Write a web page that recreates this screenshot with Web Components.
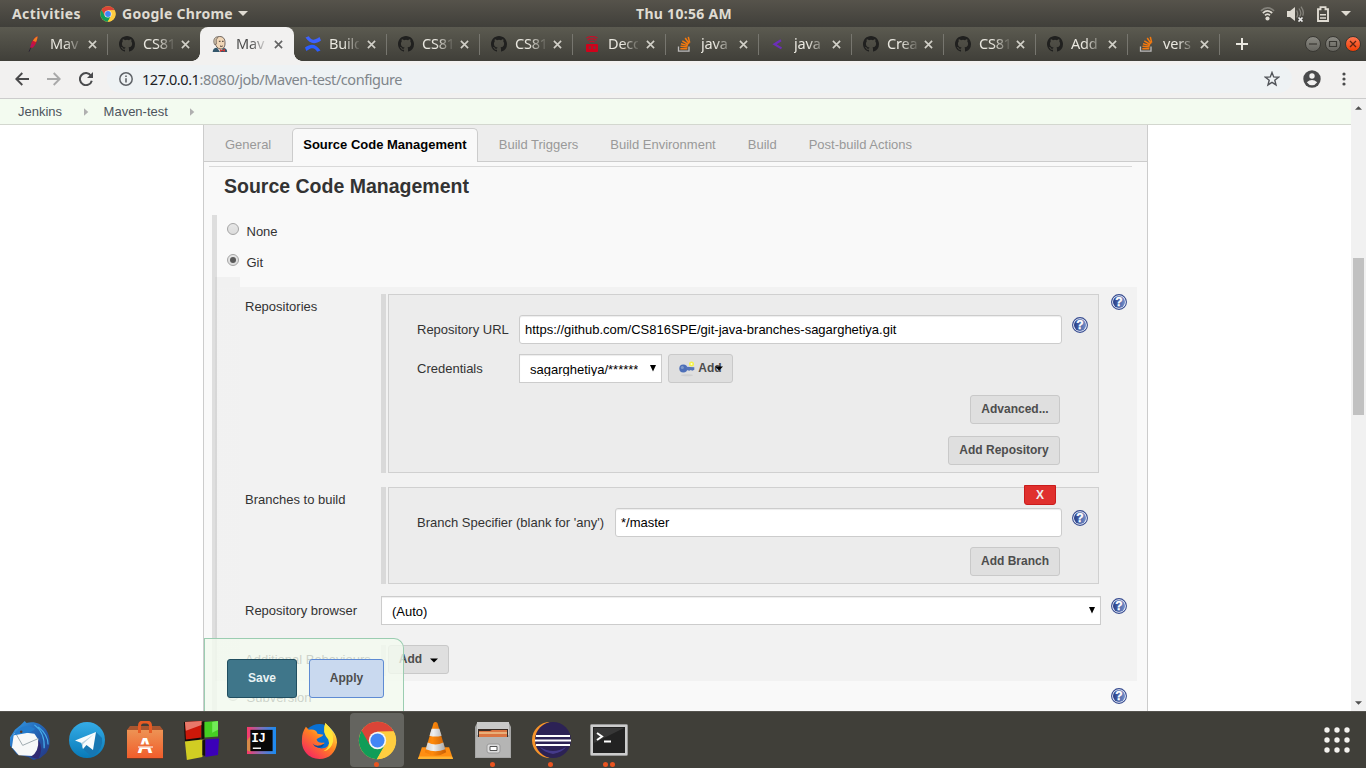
<!DOCTYPE html>
<html lang="en">
<head>
<meta charset="utf-8">
<title>Maven-test Config [Jenkins]</title>
<style>
html,body{margin:0;padding:0;height:768px;overflow:hidden;background:#fff}
</style>
</head>
<body>
<desktop-screen></desktop-screen>
<script>
const UI = '"Noto Sans","Open Sans",sans-serif';
const WEB = '"Liberation Sans",Arial,sans-serif';

function define(name, html, setup) {
  const tpl = document.createElement('template');
  customElements.define(name, class extends HTMLElement {
    connectedCallback() {
      if (this.shadowRoot) return;
      const root = this.attachShadow({mode: 'open'});
      tpl.innerHTML = typeof html === 'function' ? html(this) : html;
      root.append(tpl.content.cloneNode(true));
      if (setup) setup(this, root);
    }
  });
}

/* Text whose letter spacing is adjusted to fill a given width */
define('fit-text', '<style>:host{display:inline-block;white-space:nowrap}</style><span><slot></slot></span>', (el, root) => {
  const w = +el.getAttribute('w'), s = root.querySelector('span');
  const n = el.textContent.length;
  s.style.letterSpacing = ((w - s.getBoundingClientRect().width) / n) + 'px';
  el.style.width = w + 'px';
});

const github = '<path fill="#20201f" fill-rule="evenodd" d="M8 0C3.58 0 0 3.58 0 8c0 3.54 2.29 6.53 5.47 7.59.4.07.55-.17.55-.38 0-.19-.01-.82-.01-1.49-2.01.37-2.53-.49-2.69-.94-.09-.23-.48-.94-.82-1.13-.28-.15-.68-.52-.01-.53.63-.01 1.08.58 1.23.82.72 1.21 1.87.87 2.33.66.07-.52.28-.87.51-1.07-1.78-.2-3.64-.89-3.64-3.95 0-.87.31-1.59.82-2.15-.08-.2-.36-1.02.08-2.12 0 0 .67-.21 2.2.82a7.6 7.6 0 0 1 4 0c1.53-1.04 2.2-.82 2.2-.82.44 1.1.16 1.92.08 2.12.51.56.82 1.27.82 2.15 0 3.07-1.87 3.75-3.65 3.95.29.25.54.73.54 1.48 0 1.07-.01 1.93-.01 2.2 0 .21.15.46.55.38A8 8 0 0 0 16 8c0-4.42-3.58-8-8-8z"/>';
const stack = '<path d="M1.500 10.500v4.700h10.500v-4.700" fill="none" stroke="#bcbbbb" stroke-width="1.300"/><g stroke="#f4790f" stroke-width="1.500"><path d="M3.300 12.700h7M3.500 10.200l7 .8M4 7.700l6.800 1.900M5.300 4.800l6 3.700M8.200 2l3.900 5.600M11.300.9l1.400 5.800"/></g>';
const chrome = '<circle cx="24" cy="24" r="23" fill="#fbca3f"/><path d="M4.100 12.500A23 23 0 0 1 44 12.700L24 13.500 14 29.800z" fill="#db4437"/><path d="M4.500 12A23 23 0 0 0 23 47L33 29.500 24 34 14.500 29.600z" fill="#109d58"/><path d="M23.500 47A23 23 0 0 0 43.800 13H24L33.700 29z" fill="#fecd40"/><circle cx="24" cy="24" r="10.700" fill="#f5f5f5"/><circle cx="24" cy="24" r="8.700" fill="#4285f4"/>';
const ICONS = {
  chrome: ['0 0 48 48', chrome],
  github: ['0 0 16 16', github],
  stack: ['0 0 16 16', stack],
  feather: ['0 0 16 16', '<path d="M11.500.2C9.500.8 7 3.700 5.600 6.500L4 12.300 6.500 11.800C9.300 9.500 11.300 5 11.500.2z" fill="#cc1437"/><path d="M11.500.2C9.900.8 7.800 3 6.900 4.800L10 6C11 4 11.500 2 11.500.2z" fill="#f08020"/><path d="M6 7.500l-2 4.800L8.500 9z" fill="#b01364"/><path d="M4.800 11.500L3 15.700" stroke="#2d2635"/>'],
  jenkins: ['0 0 16 16', '<path d="M.7 16C1 12.700 2.400 12 5 11.800L11 11.700C14 12 15 13 15.200 16z" fill="#34566b"/><path d="M5 11.500L8 16 12 11.500z" fill="#f6f3ea"/><path d="M3 5C2.700 2 5 .5 7.700.5 11.200.5 13.200 3 13 6.800 13.200 10 12 13 8.900 13 5.500 13 3.700 10 3.300 7.500z" fill="#f0d6b7" stroke="#4e4440" stroke-width=".8"/><path d="M2.500 8.500C1 5 1.800 2 4.500.9L5.800 1.600 4.300 3.700 4.400 8z" fill="#c9bda8" stroke="#5a4d46" stroke-width=".6"/><path d="M6.900 5.300h1.600M10 5.300h1.600M8 10q1.500.8 2.700 0" stroke="#3e3430" fill="none"/><path d="M7.700 13l2.600 1.300L13 12.800v3l-2.700-1L8 15.900z" fill="#d33833"/>'],
  confluence: ['0 0 16 16', '<path d="M.5 1.500L3.800.2C6 3.600 8 4.800 12.600 2.300L14.500 1 16 4.600C9.500 9 5 7.800.5 1.500z" fill="#3d62ff"/><path d="M15.500 14.500L12.200 15.800C10 12.400 8 11.200 3.400 13.700L1.300 15 0 11.400C6.500 7 11 8.200 15.500 14.500z" fill="#2b5dff"/>'],
  robot: ['0 0 16 16', '<path d="M2.500 2Q8-1 13.500 2M3.500 4.200Q8 1.500 12.500 4.200M5.500 6Q8 4.500 10.500 6" fill="none" stroke="#c80d28" stroke-width="1.200"/><rect x="2" y="8" width="12" height="8" rx="1" fill="#d0021b"/><path d="M4.700 10.300h2.200v2.600H4.700zM9.300 10.300h2.200v2.600H9.300z" fill="#78353a"/>'],
  angle: ['0 0 16 16', '<path d="M11 4.200L4.500 8.200 11.500 12.400" fill="none" stroke="#6c2eb9" stroke-width="2.200"/>'],
  close: ['0 0 10 10', '<path d="M1 1l8 8M9 1L1 9" stroke="currentColor" stroke-width="1.800"/>'],
  plus: ['0 0 12 12', '<path d="M6 0v12M0 6h12" stroke="#e9e7df" stroke-width="2"/>'],
  wifi: ['0 0 16 16', '<path d="M1 5.200Q8-1 15 5.200" stroke="#84827b" stroke-width="1.800" fill="none"/><path d="M3 7.500Q8 3 13 7.500M5.300 10Q8 7.300 10.700 10" stroke="#dfdbd2" stroke-width="1.800" fill="none"/><circle cx="8" cy="13.300" r="2.200" fill="#dfdbd2"/>'],
  volume: ['0 0 18 16', '<path d="M1 5h3l5-4v14l-5-4H1z" fill="#dfdbd2"/><path d="M10.700 4.500q2 3.500 0 7M13 2.500q3.400 5 .5 8M15 .7q3.500 5 1.700 9" stroke="#85837c" stroke-width="1.300" fill="none"/><path d="M12.500 11.500l4 4M16.500 11.500l-4 4" stroke="#eee" stroke-width="1.700"/>'],
  battery: ['0 0 12 16', '<path d="M1 3.200h2.500V1.100h5v2.100H11V15H1z" fill="none" stroke="#dfdbd2" stroke-width="1.900"/><path d="M3 8.800h6M3 11.900h6" stroke="#dfdbd2" stroke-width="1.500"/>'],
  caret: ['0 0 10 5', '<path d="M0 0h10L5 5z" fill="currentColor"/>'],
  back: ['0 0 14 14', '<path d="M14 7H1.500M7.300 1L1.300 7l6 6" fill="none" stroke="currentColor" stroke-width="1.900"/>'],
  fwd: ['0 0 14 14', '<path d="M0 7h12.500M6.700 1l6 6-6 6" fill="none" stroke="currentColor" stroke-width="1.900"/>'],
  reload: ['0 0 14 14', '<path d="M12 3.700A6.050 6.050 0 1 0 12.800 8.700" fill="none" stroke="#4a4b4d" stroke-width="2"/><path d="M14 0v6H8z" fill="#4a4b4d"/>'],
  info: ['0 0 14 14', '<circle cx="7" cy="7" r="6.200" fill="none" stroke="#5f6368" stroke-width="1.500"/><path d="M7 6.200v4.300M7 3.400V5" stroke="#5f6368" stroke-width="1.600"/>'],
  star: ['0 0 16 16', '<path d="M8 1.500l1.700 4.400 4.800.3-3.700 3 1.200 4.700L8 11.300l-4 2.600 1.200-4.700-3.700-3 4.800-.3z" fill="none" stroke="#515459" stroke-width="1.400"/>'],
  user: ['0 0 18 18', '<circle cx="9" cy="9" r="8.700" fill="#4a4a4b"/><circle cx="9" cy="6" r="2.700" fill="#f2f1f0"/><path d="M3.800 12.200Q9 7.800 14.200 12.200 12.200 15.200 9 15.200 5.800 15.200 3.800 12.200z" fill="#f2f1f0"/>'],
  dots: ['0 0 4 14', '<g fill="#4a4a4b"><circle cx="2" cy="2" r="1.600"/><circle cx="2" cy="7" r="1.600"/><circle cx="2" cy="12" r="1.600"/></g>'],
  crumb: ['0 0 5 8', '<path d="M0 .3L4.300 4 0 7.700z" fill="#b0b0b0"/>'],
  help: ['0 0 16 16', '<defs><linearGradient id="h"><stop stop-color="#253c87"/><stop offset="1" stop-color="#7590ca"/></linearGradient></defs><circle cx="8" cy="8" r="7.400" fill="#f7f9ff" stroke="#354a8f" stroke-width="1.100"/><circle cx="8" cy="8" r="6" fill="url(#h)"/><text x="8" y="12.300" text-anchor="middle" font-size="12" font-weight="bold" font-family="Liberation Sans" fill="#fff" stroke="#fff" stroke-width=".3">?</text>'],
  key: ['0 0 16 16', '<ellipse cx="8" cy="14.300" rx="6" ry="1" fill="#d0d0d0"/><circle cx="12.500" cy="3" r="2.500" fill="#f4f24b"/><circle cx="12.500" cy="3" r="1" fill="#fffed0"/><circle cx="4.300" cy="7.500" r="4" fill="#4d6fb8"/><circle cx="3.300" cy="6.500" r="1.500" fill="#8099c9"/><path d="M7 5.700l8.300.5v2.500l-2 1-1.500-.7-1.500.8L7.500 9z" fill="#5574b9"/>'],
  thunderbird: ['0 0 42 42', '<defs><linearGradient id="t" x1="0" y1="0" x2="1" y2="1"><stop stop-color="#36a0ea"/><stop offset=".45" stop-color="#2467b8"/><stop offset="1" stop-color="#24317d"/></linearGradient></defs><path d="M12 5L16 1 18 3C25 1 33 3 38 10 43 18 43 27 38 34L32 39 25 41 20 38 8 35 1 26 1 18 6 10z" fill="url(#t)"/><path d="M5 14L10 12 26 14 30 20 31 31 25 37 10 36 3 28z" fill="#f7f8f8"/><path d="M7 14L14 26 30 19" stroke="#9ca8ad" fill="none"/><path d="M10 9Q17 4 27 9 23 13 14 14L4 16z" fill="#247ccd"/><path d="M26 5Q37 13 36 29M30 7Q40 15 40 25" stroke="#46aee9" fill="none" stroke-width="1.200"/><path d="M30 20Q36 29 30 40L22 38Q31 33 30 20z" fill="#302b72"/><circle cx="12.500" cy="12" r="1.300" fill="#5c3a27"/>'],
  telegram: ['0 0 36 36', '<defs><linearGradient id="g" x2="0" y2="1"><stop stop-color="#35ace6"/><stop offset="1" stop-color="#087ab8"/></linearGradient></defs><circle cx="18" cy="18" r="18" fill="url(#g)"/><path d="M27 10L33 16Q35 27 23 35L14 27z" fill="#1677b3"/><path d="M6 18.500L27 10 24 28 17.500 23 14 27 12.500 21z" fill="#f7fbfd"/><path d="M12.500 21L25 12 14 22v5z" fill="#b7d1df"/>'],
  software: ['0 0 36 38', '<defs><linearGradient id="s" x2="0" y2="1"><stop stop-color="#ed9354"/><stop offset="1" stop-color="#f15d2b"/></linearGradient></defs><path d="M0 8h36v30H0z" fill="#6b3825"/><path d="M0 9h36v28H0z" fill="url(#s)"/><path d="M3 5h30l3 4H0z" fill="#a85630"/><path d="M12.500 12V5q0-4 4-4h3q4 0 4 4v7" fill="none" stroke="#e75b24" stroke-width="3"/><text x="18" y="31.500" text-anchor="middle" font-family="Open Sans" font-weight="bold" font-size="21" fill="#fff">A</text><path d="M11 25h15" stroke="#ef6d37" stroke-width="3"/><path d="M11 26h15" stroke="#fff"/>'],
  blocks: ['0 0 38 42', '<path d="M2 2l17-1v19L3 22z" fill="#130a08"/><path d="M3 2l17-1v17L4 20z" fill="#cc1809"/><path d="M22 2l15-1v16l-14 1z" fill="#45cf22"/><path d="M3 22l18-2v18L5 41z" fill="#d1cd23"/><path d="M21 21l3-1v17l-3-1zM20 2l3-1v18l-3 1z" fill="#161208"/><path d="M24 20l14-1-1 17-13 2z" fill="#3b00b8"/><path d="M3 2l17-1v4L4 11z" fill="#e8796a"/><path d="M31 2l6-1v9l-6 3z" fill="#72ec57"/>'],
  idea: ['0 0 30 30', '<defs><linearGradient id="i" x2="1"><stop stop-color="#ff3867"/><stop offset=".5" stop-color="#7c72bd"/><stop offset="1" stop-color="#168df5"/></linearGradient></defs><path d="M0 1h30v28H0z" fill="url(#i)"/><path d="M0 15l4-5v17l-4-2z" fill="#d78b48"/><path d="M3.500 4h23v22h-23z" fill="#070707"/><text x="4.500" y="17" font-family="Liberation Mono" font-weight="bold" font-size="13" letter-spacing="-.6" fill="#fff">IJ</text><path d="M6 23h8.500" stroke="#fff" stroke-width="1.500"/>'],
  firefox: ['0 0 38 38', '<defs><linearGradient id="f" x1=".9" y1=".1" x2=".2" y2="1"><stop stop-color="#fff34f"/><stop offset=".45" stop-color="#ff841f"/><stop offset="1" stop-color="#f52264"/></linearGradient></defs><circle cx="19" cy="19" r="17" fill="#0870d4"/><path d="M5 5L8 8C12 7 16 8 17 12L23 13C21 16 17 16 16 18 17 21 20 22 24 21 24 25 18 26 14 24 18 29 28 28 29 21 29 14 23 11 25 1 31 7 37 12 37 21 36 31 29 38 19 38 8 38 0 29 1 18 1 13 2 10 5 5z" fill="url(#f)"/><path d="M25 1Q34 9 33 20 31 29 23 30 31 26 28 18 21 10 25 1z" fill="#ffe638"/><path d="M12 22q4 5 12 0-3 7-10 3z" fill="#084d9e"/>'],
  vlc: ['0 0 36 40', '<defs><linearGradient id="v"><stop stop-color="#f27d09"/><stop offset=".35" stop-color="#ff8a0b"/><stop offset="1" stop-color="#c65e06"/></linearGradient><linearGradient id="w"><stop stop-color="#d2d1d0"/><stop offset=".4" stop-color="#eee"/><stop offset="1" stop-color="#a9a8a7"/></linearGradient></defs><path d="M4 27h28l4 12H0z" fill="#ff8e12"/><path d="M1 36.500h34l1 2.500H0z" fill="#ffb332"/><path d="M7 32L16 2q2-2 4 0l9 30q-11 7-22 0z" fill="url(#v)"/><path d="M14 8h8l2.300 7q-6.500 2-12.500 0zM10 22q8 4 16 0l2 7q-10 4-20 0z" fill="url(#w)"/>'],
  files: ['0 0 36 38', '<path d="M2 2h32l2 4v31H0V6z" fill="#a6a6a5"/><path d="M2 1h32v13H2z" fill="#c9c9c8"/><path d="M3 8h30v8H3z" fill="#382b24"/><path d="M4 10h11l2-1h15v7H4z" fill="#da7542"/><path d="M4 12h28" stroke="#edc38d" stroke-width="1.500"/><path d="M1 16h34v20H1z" fill="#b5b5b4"/><rect x="12" y="23" width="13" height="9" rx="2" fill="#ddd" stroke="#999"/><path d="M15 25.500h7v4h-7z" fill="#fff" stroke="#555"/>'],
  eclipse: ['0 0 42 38', '<path d="M20 1A18 18 0 0 0 20 37 20 20 0 0 1 20 1z" fill="#f7942a"/><circle cx="23" cy="19" r="18" fill="#2c2255"/><path d="M10 26q13 8 26 0-3 5-13 7-10-2-13-7z" fill="#453b8b"/><path d="M6 15h34M5 19.500h36M6 24h34" stroke="#fff" stroke-width="2"/>'],
  terminal: ['0 0 38 32', '<rect x=".5" y=".5" width="37" height="31" rx="1" fill="#ccc" stroke="#999"/><path d="M3 3h32v26H3z" fill="#222"/><path d="M4 4h30L4 19z" fill="#373737"/><path d="M7 9l5 3.500L7 16M14 17.500h7" fill="none" stroke="#fff" stroke-width="2"/>'],
  apps: ['0 0 28 28', '<g fill="#f4f2ee"><circle cx="4" cy="4" r="2.700"/><circle cx="14" cy="4" r="2.700"/><circle cx="24" cy="4" r="2.700"/><circle cx="4" cy="14" r="2.700"/><circle cx="14" cy="14" r="2.700"/><circle cx="24" cy="14" r="2.700"/><circle cx="4" cy="24" r="2.700"/><circle cx="14" cy="24" r="2.700"/><circle cx="24" cy="24" r="2.700"/></g>'],
  wmin: ['0 0 16 16', '<path d="M4 8h8" stroke="#393833" stroke-width="1.200"/>'],
  wmax: ['0 0 16 16', '<path d="M4.500 5.500h7v5h-7z" fill="none" stroke="#393833" stroke-width="1.200"/>'],
  wclose: ['0 0 16 16', '<path d="M5 5l6 6M11 5l-6 6" stroke="#5b2312" stroke-width="1.300"/>']
};
define('app-icon', el => {
  const [vb, body] = ICONS[el.getAttribute('name')];
  const w = el.getAttribute('w') || 16, h = el.getAttribute('h') || w;
  return `<style>:host{display:block;flex:none;width:${w}px;height:${h}px}svg{display:block}</style><svg width="${w}" height="${h}" viewBox="${vb}">${body}</svg>`;
});

define('top-bar', `<style>
:host{display:grid;grid-template-columns:1fr auto 1fr;align-items:center;height:27px;background:linear-gradient(#56534b,#403f3a);color:#dfdbd2;font:bold 14px/26px ${UI}}
div{display:flex;align-items:center}.l{padding-left:12px}.r{justify-content:flex-end;padding-right:15px}
</style>
<div class="l"><fit-text w="69">Activities</fit-text><app-icon name="chrome" w="16" style="margin:0 6px 0 19px"></app-icon><fit-text w="111">Google Chrome</fit-text><app-icon name="caret" w="10" h="5" style="margin-left:5px"></app-icon></div>
<fit-text w="96" style="margin-left:2px">Thu 10:56 AM</fit-text>
<div class="r"><app-icon name="wifi" w="15"></app-icon><app-icon name="volume" w="18" h="16" style="margin:0 13px 0 11px"></app-icon><app-icon name="battery" w="12" h="16"></app-icon><app-icon name="caret" w="10" h="5" style="margin-left:12px"></app-icon></div>`);

define('browser-tab', el => `<style>
:host{display:flex;align-items:center;box-sizing:border-box;position:relative;width:${el.getAttribute('w') || 93}px;height:34px;flex:none;padding-left:11px;color:#e9e7df;font:14.500px/34px ${UI}}
:host::after{content:"";position:absolute;right:0;top:7px;width:1px;height:21px;background:#77766f}
:host([nosep])::after{display:none}
:host([active]){background:#f2f1f0;color:#4c4c4c;border-radius:8px 8px 0 0;margin:0 0 0 -1px;padding-left:12px;width:94px}
:host([active])::after{display:block;background:radial-gradient(circle at 100% 0,transparent 7.500px,#f2f1f0 8px);width:8px;height:8px;top:auto;bottom:0;right:-8px}
:host([active])::before{content:"";position:absolute;background:radial-gradient(circle at 0 0,transparent 7.500px,#f2f1f0 8px);width:8px;height:8px;bottom:0;left:-8px}
.t{width:30px;height:34px;line-height:33px;margin-left:8px;overflow:hidden;white-space:nowrap;letter-spacing:-.2px;-webkit-mask-image:linear-gradient(90deg,#000 14px,rgba(0,0,0,.15) 30px)}
.x{margin-left:8px;opacity:.85}:host([w]) .x{margin-left:7px}
</style><app-icon name="${el.getAttribute('icon')}"></app-icon><span class="t"><slot></slot></span><app-icon class="x" name="close" w="9"></app-icon>`);

define('tab-strip', `<style>
:host{display:flex;align-items:center;height:34px;background:linear-gradient(#5b5a50,#403f39);padding-left:15px}
.win{display:flex;gap:4px;margin-left:auto;padding-right:5px}
.win span{width:14px;height:14px;border-radius:50%;border:1px solid #393833;background:linear-gradient(#8b8a83,#66655f)}
.win app-icon{margin:-1px}.win .c{background:linear-gradient(#ff7650,#ef3e05)}
</style>
<browser-tab icon="feather">Mav</browser-tab><browser-tab icon="github" nosep>CS81</browser-tab><browser-tab icon="jenkins" active>Mav</browser-tab><browser-tab icon="confluence">Build</browser-tab><browser-tab icon="github">CS81</browser-tab><browser-tab icon="github">CS81</browser-tab><browser-tab icon="robot">Deco</browser-tab><browser-tab icon="stack">java</browser-tab><browser-tab icon="angle">java</browser-tab><browser-tab icon="github" w="92">Crea</browser-tab><browser-tab icon="github" w="92">CS81</browser-tab><browser-tab icon="github" w="92">Add</browser-tab><browser-tab icon="stack" w="92">vers</browser-tab>
<app-icon name="plus" w="12" style="margin-left:16px"></app-icon>
<div class="win"><span><app-icon name="wmin"></app-icon></span><span><app-icon name="wmax"></app-icon></span><span class="c"><app-icon name="wclose"></app-icon></span></div>`);

define('tool-bar', `<style>
:host{display:flex;align-items:center;box-sizing:border-box;height:38px;background:#f2f1f0;border-bottom:1px solid #ccc;padding:0 20px 1px 15px}
.u{display:flex;align-items:center;flex:1;height:28px;margin-left:14px;padding:0 12px;border-radius:14px;background:#eef2f4;font:14.500px/28px ${UI};color:#80868b}
.u fit-text{margin-left:9px}b{font-weight:400;color:#202124}.u app-icon:last-child{margin-left:auto}
</style>
<app-icon name="back" w="14" style="color:#4a4a4b"></app-icon><app-icon name="fwd" w="14" style="color:#a9a9a9;margin:0 18px"></app-icon><app-icon name="reload" w="14"></app-icon>
<div class="u"><app-icon name="info" w="14"></app-icon><fit-text w="260" style="margin-top:-1px"><b>127.0.0.1</b>:8080/job/Maven-test/configure</fit-text><app-icon name="star" w="16"></app-icon></div>
<app-icon name="user" w="18" style="margin:0 21px 0 11px"></app-icon><app-icon name="dots" w="4" h="14"></app-icon>`);

define('crumb-bar', `<style>
:host{display:flex;align-items:center;box-sizing:border-box;height:26px;background:#f3fbf0;border-bottom:1px solid #d3d7cf;padding-left:18px;font:13px/25px ${WEB};color:#4d545d}
</style><span>Jenkins</span><app-icon name="crumb" w="5" h="8" style="margin:1px 15px 0 21.500px"></app-icon><span>Maven-test</span><app-icon name="crumb" w="5" h="8" style="margin:1px 0 0 22px"></app-icon>`);

define('section-tabs', `<style>
:host{display:flex;box-sizing:border-box;height:37px;background:#ededed;border-bottom:1px solid #ccc;padding-left:21px;font:13px/39px ${WEB};color:#999}
span{white-space:nowrap;margin-right:32px}.a{box-sizing:border-box;width:186px;height:34px;margin:3px 20.500px 0 -11px;padding-left:10px;border:1px solid #ccc;border-bottom:0;border-radius:5px 5px 0 0;background:#f9f9f9;color:#000;font-weight:bold;line-height:31px}
</style><span>General</span><span class="a">Source Code Management</span><span>Build Triggers</span><span>Build Environment</span><span>Build</span><span>Post-build Actions</span>`);

define('radio-line', el => `<style>
:host{display:flex;height:31px;font:13px/34px ${WEB};color:#333}
i{box-sizing:border-box;width:12px;height:12px;border:1px solid #a5a5a5;border-radius:50%;margin:8px 7.500px 0 0;background:linear-gradient(#e7e7e7,#dcdcdc);display:grid;place-items:center}
:host([on]) i::after{content:"";width:6px;height:6px;border-radius:50%;background:#5a5a5a}
</style><i></i><slot></slot>`);

define('j-button', `<style>
:host{display:inline-flex;align-items:center;justify-content:center;box-sizing:border-box;height:29px;border:1px solid #c9c9c9;border-radius:3px;background:#dfdfdf;color:#4d4d4d;font:bold 12px/27px ${WEB};white-space:nowrap;flex:none}
:host([primary]){height:39px;background:#3f768a;border-color:#204e60;color:#e8f2f4}
:host([plain]){height:39px;background:#c9d9ef;border-color:#5e8bd3}
</style><slot></slot>`);

define('text-field', `<style>
:host{display:block;box-sizing:border-box;height:29px;border:1px solid #ccc;border-radius:3px;background:#fff;box-shadow:inset 0 1px 1px rgba(0,0,0,.075);padding-left:5px;font:13px/27px ${WEB};color:#000;white-space:nowrap}
</style><slot></slot>`);

define('select-field', `<style>
:host{display:flex;justify-content:space-between;box-sizing:border-box;height:29px;border:1px solid #ccc;background:#fff;box-shadow:inset 0 1px 1px rgba(0,0,0,.075);padding:0 5px 0 10px;font:13px/17px ${WEB};color:#000}
span{height:15px;margin-top:6px;overflow:hidden}:host([full]) span{height:18px}
svg{margin-top:10px}
</style><span><slot></slot></span><svg width="6" height="7"><path d="M0 0h6L3 6.500z" fill="#000"/></svg>`);

define('repeat-block', el => `<style>
:host{display:grid;grid-template-columns:5px 711px;column-gap:2px;width:718px;height:${el.getAttribute('h')}px}
i{background:#d9d9d9}.b{box-sizing:border-box;border:1px solid #d0d0d0;background:#ececec;padding:20px 10px 0 28px;display:flex;flex-direction:column;position:relative}
</style><i></i><div class="b"><slot></slot></div>`);

define('form-line', el => `<style>
:host{display:grid;grid-template-columns:136px 720px 16px;column-gap:0;height:${el.getAttribute('h')}px;padding-left:5px;font:13px/${el.getAttribute('lh') || 25}px ${WEB};color:#333}
.h{padding:${el.getAttribute('ht') || 0}px 0 0 10px}
</style><span>${el.getAttribute('label')}</span><div><slot></slot></div><div class="h">${el.hasAttribute('help') ? '<app-icon name="help"></app-icon>' : ''}</div>`);

define('git-form', `<style>
:host{display:block;width:897px;height:394px;box-sizing:border-box;margin-left:23px;padding-top:7px;background:#f2f2f2;font:13px/29px ${WEB};color:#333}
.row{display:flex;height:29px;line-height:29px}.row text-field{flex:none}
.row app-icon{margin:2px 0 0 10px}.right{align-self:flex-end;margin-right:28px}
.del{position:absolute;top:-3px;right:42px;box-sizing:border-box;width:32px;height:20px;border:1px solid #c91c1c;border-radius:0 0 3px 3px;background:#e0302d;color:#eee;font:bold 12px/19px ${WEB};text-align:center}
.key{position:relative}.key app-icon{margin:1px 3px 0 0}
.arrow{position:absolute;right:9px;top:11px;color:#000}
.add{display:flex;gap:2px}.add i{width:5px;height:31px;background:#e0e0e0}
</style>
<form-line h="193" label="Repositories" help>
 <repeat-block h="179">
  <div class="row"><span style="width:102px">Repository URL</span><text-field style="width:543px">https://github.com/CS816SPE/git-java-branches-sagarghetiya.git</text-field><app-icon name="help"></app-icon></div>
  <div class="row" style="margin-top:10px"><span style="width:102px">Credentials</span><select-field style="width:143px">sagarghetiya/******</select-field><j-button class="key" style="width:65px;margin-left:6px"><app-icon name="key" w="16"></app-icon>Add<app-icon class="arrow" style="margin:0" name="caret" w="8" h="5"></app-icon></j-button></div>
  <j-button class="right" style="width:90px;margin-top:12px">Advanced...</j-button>
  <j-button class="right" style="width:112px;margin-top:12px">Add Repository</j-button>
 </repeat-block>
</form-line>
<form-line h="109" label="Branches to build">
 <repeat-block h="97">
  <div class="row"><span style="width:198px">Branch Specifier (blank for 'any')</span><text-field style="width:447px">*/master</text-field><app-icon name="help"></app-icon></div>
  <j-button class="right" style="width:90px;margin-top:10px">Add Branch</j-button>
  <span class="del">X</span>
 </repeat-block>
</form-line>
<form-line h="49" lh="30" ht="2" label="Repository browser" help><select-field full>(Auto)</select-field></form-line>
<form-line h="36" lh="30" label="Additional Behaviours"><div class="add"><i></i><j-button style="width:61px">Add<app-icon name="caret" w="8" h="5" style="color:#000;margin:1px 0 0 8px"></app-icon></j-button></div></form-line>`);

define('save-bar', `<style>
:host{display:flex;gap:12px;box-sizing:border-box;position:absolute;left:204px;bottom:0;width:200px;height:73px;padding:20px 0 0 22px;border:1px solid #9bcdb1;border-bottom:0;border-radius:0 10px 0 0;background:rgba(243,250,239,.8)}
</style><j-button primary style="width:70px">Save</j-button><j-button plain style="width:75px">Apply</j-button>`);

define('scroll-bar', `<style>
:host{display:flex;flex-direction:column;align-items:center;box-sizing:border-box;width:15px;height:612px;padding:7px 0 6px;background:#f1f1f1;color:#505050}
i{width:11px;height:157px;margin:148px 0 auto;background:#c1c1c1}
</style><app-icon name="caret" w="7" h="4" style="transform:rotate(180deg)"></app-icon><i></i><app-icon name="caret" w="7" h="4"></app-icon>`);

define('config-page', `<style>
:host{display:grid;grid-template-columns:1fr 15px;height:612px;overflow:hidden;position:relative;background:#fff}
.main{min-width:0}
.panel{box-sizing:border-box;margin-left:203px;width:945px;height:586px;overflow:hidden;background:#f9f9f9;border:solid #ccc;border-width:0 1px}
hr{margin:4px 15px 0 5px;border:0;height:1px;background:#d9d9d9}
h1{margin:8px 0 17px 20px;font:bold 19.500px/23px ${WEB};color:#333}
.scm{margin-left:8px;width:925px;height:510px;border-left:5px solid #dedede;box-sizing:border-box}
.opts{height:72px;padding-left:10px}
.step{width:25px;height:10px;margin:-10px 0 0 -2px;background:rgba(0,0,0,.03)}
.side{display:flex;margin-left:-2px;padding-left:2px;background:linear-gradient(rgba(0,0,0,.03),rgba(0,0,0,.03)) no-repeat;background-size:25px 100%}
.sub{display:flex;justify-content:space-between;padding:0 10px}
</style>
<div class="main"><crumb-bar></crumb-bar>
<div class="panel"><section-tabs></section-tabs><hr><h1>Source Code Management</h1>
<div class="scm"><div class="opts"><radio-line>None</radio-line><radio-line on>Git</radio-line></div><div class="step"></div><div class="side"><git-form></git-form></div>
<div class="sub"><radio-line>Subversion</radio-line><app-icon name="help" style="margin-top:7px"></app-icon></div></div>
</div></div>
<scroll-bar></scroll-bar><save-bar></save-bar>`);

define('dock-item', el => `<style>
:host{display:flex;align-items:center;justify-content:center;width:58px;height:57px;position:relative}
:host([active])::before{content:"";position:absolute;left:2px;top:1px;width:54px;height:54px;border-radius:4px;background:#64645f}
app-icon{position:relative;z-index:1}
.d{position:absolute;z-index:2;bottom:2px;left:0;right:1px;display:flex;justify-content:center;gap:2px}
.d i{width:5px;height:5px;border-radius:50%;background:#e95420}
</style><app-icon name="${el.getAttribute('icon')}" w="${el.getAttribute('w')}" h="${el.getAttribute('h')}"></app-icon><div class="d">${'<i></i>'.repeat(+el.getAttribute('dots') || 0)}</div>`);

define('dock-bar', `<style>
:host{display:flex;align-items:center;box-sizing:border-box;height:57px;background:#403f39;border-top:1px solid #55534e;padding-right:15px}
.b{padding-right:5px;box-sizing:border-box}
</style>
<dock-item icon="thunderbird" w="41" h="41"></dock-item><dock-item icon="telegram" w="36" h="36"></dock-item><dock-item icon="software" w="36" h="38"></dock-item><dock-item class="b" icon="blocks" w="37" h="41"></dock-item><dock-item icon="idea" w="29" h="29"></dock-item><dock-item icon="firefox" w="37" h="37"></dock-item><dock-item icon="chrome" w="39" h="39" active dots="1"></dock-item><dock-item icon="vlc" w="35" h="39"></dock-item><dock-item icon="files" w="36" h="38" dots="1"></dock-item><dock-item icon="eclipse" w="42" h="38" dots="1"></dock-item><dock-item icon="terminal" w="38" h="32" dots="2"></dock-item>
<app-icon name="apps" w="28" style="margin-left:auto"></app-icon>`);

define('desktop-screen', `<style>:host{display:grid;grid-template-rows:27px 34px 38px 612px 57px;width:1366px;height:768px;overflow:hidden}</style>
<top-bar></top-bar><tab-strip></tab-strip><tool-bar></tool-bar><config-page></config-page><dock-bar></dock-bar>`);
</script>
</body>
</html>
